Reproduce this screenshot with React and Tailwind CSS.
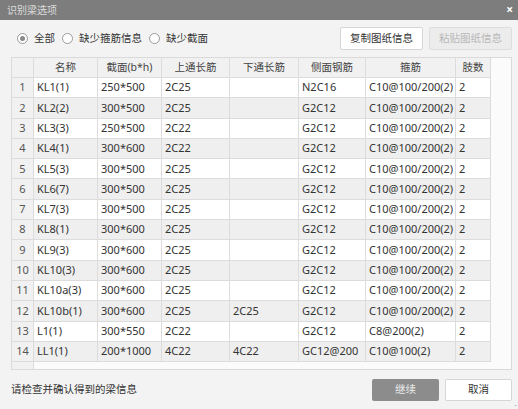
import React from "react";

const rows = [
  ["KL1(1)", "250*500", "2C25", "", "N2C16", "C10@100/200(2)", "2"],
  ["KL2(2)", "300*500", "2C25", "", "G2C12", "C10@100/200(2)", "2"],
  ["KL3(3)", "250*500", "2C22", "", "G2C12", "C10@100/200(2)", "2"],
  ["KL4(1)", "300*600", "2C22", "", "G2C12", "C10@100/200(2)", "2"],
  ["KL5(3)", "300*500", "2C25", "", "G2C12", "C10@100/200(2)", "2"],
  ["KL6(7)", "300*500", "2C25", "", "G2C12", "C10@100/200(2)", "2"],
  ["KL7(3)", "300*500", "2C25", "", "G2C12", "C10@100/200(2)", "2"],
  ["KL8(1)", "300*600", "2C25", "", "G2C12", "C10@100/200(2)", "2"],
  ["KL9(3)", "300*600", "2C25", "", "G2C12", "C10@100/200(2)", "2"],
  ["KL10(3)", "300*600", "2C25", "", "G2C12", "C10@100/200(2)", "2"],
  ["KL10a(3)", "300*600", "2C25", "", "G2C12", "C10@100/200(2)", "2"],
  ["KL10b(1)", "300*600", "2C25", "2C25", "G2C12", "C10@100/200(2)", "2"],
  ["L1(1)", "300*550", "2C22", "", "G2C12", "C8@200(2)", "2"],
  ["LL1(1)", "200*1000", "4C22", "4C22", "GC12@200", "C10@100(2)", "2"],
];

const headers = ["名称", "截面(b*h)", "上通长筋", "下通长筋", "侧面钢筋", "箍筋", "肢数"];
const widths = ["w-[64px]", "w-[64px]", "w-[68px]", "w-[69px]", "w-[67px]", "w-[90px]", "w-[35px]"];

const font = { fontFamily: '"Noto Sans", "Noto Sans CJK SC", sans-serif' };

function Radio({ checked, label }) {
  return (
    <div className="flex items-center gap-[6px]">
      <div className="w-[11px] h-[11px] rounded-full border border-[#9a9a9a] bg-white flex items-center justify-center">
        {checked && <div className="w-[5px] h-[5px] rounded-full bg-[#8a8a8a]" />}
      </div>
      <span className="text-[10.5px] text-[#333]">{label}</span>
    </div>
  );
}

export default function App() {
  return (
    <div className="w-[518px] h-[409px] bg-[#f3f3f3] flex flex-col relative overflow-hidden" style={font}>
      <div className="h-[20px] bg-[#7d7d7d] flex items-center justify-between pl-[7px] pr-[5px]">
        <span className="text-[10px] text-[#dcdcdc] leading-none">识别梁选项</span>
        <span className="text-[12px] text-white leading-none font-bold">×</span>
      </div>
      <div className="h-[37px] flex items-center justify-between pl-[17px] pr-[6px]">
        <div className="flex items-center gap-[7px]">
          <Radio checked label="全部" />
          <Radio label="缺少箍筋信息" />
          <Radio label="缺少截面" />
        </div>
        <div className="flex items-center gap-[6px]">
          <div className="w-[83px] h-[23px] bg-white border border-[#d6d6d6] rounded-[2px] flex items-center justify-center text-[10.5px] text-[#333]">复制图纸信息</div>
          <div className="w-[83px] h-[23px] bg-[#ececec] border border-[#dedede] rounded-[2px] flex items-center justify-center text-[10.5px] text-[#b8b8b8]">粘贴图纸信息</div>
        </div>
      </div>
      <div className="ml-[11px] w-[501px] h-[313px] bg-[#fbfbfb] border border-[#dadada] flex flex-col">
        <div className="flex h-[20px]">
          <div className="w-[22px] bg-[#f1f1f1] border-r border-b border-[#dcdcdc]" />
          {headers.map((h, i) => (
            <div key={i} className={`${widths[i]} bg-[#f1f1f1] border-r border-b border-[#dcdcdc] flex items-center justify-center text-[10.5px] text-[#444]`}>{h}</div>
          ))}
        </div>
        {rows.map((r, ri) => {
          const bg = ri % 2 === 1 ? "bg-[#efefef]" : "bg-white";
          return (
            <div key={ri} className="flex h-[20.3px]">
              <div className="w-[22px] bg-[#f1f1f1] border-r border-b border-[#dcdcdc] flex items-center justify-center text-[11px] text-[#555]">{ri + 1}</div>
              {r.map((c, ci) => (
                <div key={ci} className={`${widths[ci]} ${bg} border-r border-b border-[#dcdcdc] flex items-center pl-[3px] text-[11px] text-[#333] whitespace-nowrap overflow-hidden`}>{c}</div>
              ))}
            </div>
          );
        })}
        <div className="flex flex-1">
          <div className="w-[22px] bg-[#f1f1f1] border-r border-[#dcdcdc]" />
        </div>
      </div>
      <div className="flex-1 flex items-center justify-between pl-[11px] pr-[6px]">
        <span className="text-[10.5px] text-[#333]">请检查并确认得到的梁信息</span>
        <div className="flex items-center gap-[6px]">
          <div className="w-[67px] h-[22px] bg-[#8c8c8c] rounded-[2px] flex items-center justify-center text-[10.5px] text-[#e8e8e8]">继续</div>
          <div className="w-[67px] h-[22px] bg-white border border-[#d6d6d6] rounded-[2px] flex items-center justify-center text-[10.5px] text-[#333]">取消</div>
        </div>
      </div>
      <div className="absolute right-[1px] bottom-[1px] text-[7px] text-[#999] leading-none">⠠</div>
    </div>
  );
}
